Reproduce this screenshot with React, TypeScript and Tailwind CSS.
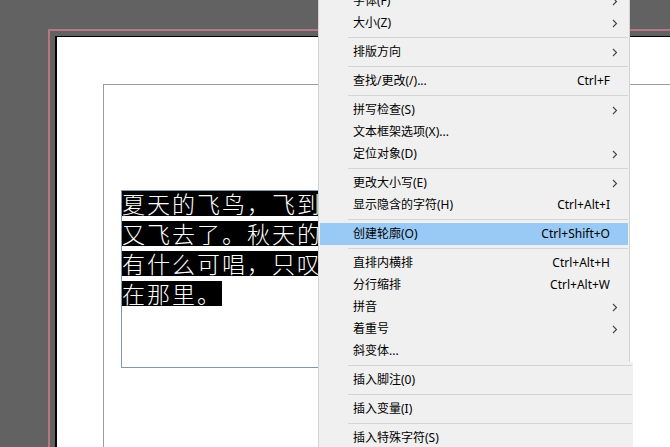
import React from "react";

type Item =
    | { kind: "sep" }
    | { kind: "item"; label: string; shortcut?: string; sub?: boolean; active?: boolean };

const upper: Item[] = [
    { kind: "item", label: "字体(F)", sub: true },
    { kind: "item", label: "大小(Z)", sub: true },
    { kind: "sep" },
    { kind: "item", label: "排版方向", sub: true },
    { kind: "sep" },
    { kind: "item", label: "查找/更改(/)...", shortcut: "Ctrl+F" },
    { kind: "sep" },
    { kind: "item", label: "拼写检查(S)", sub: true },
    { kind: "item", label: "文本框架选项(X)..." },
    { kind: "item", label: "定位对象(D)", sub: true },
    { kind: "sep" },
    { kind: "item", label: "更改大小写(E)", sub: true },
    { kind: "item", label: "显示隐含的字符(H)", shortcut: "Ctrl+Alt+I" },
    { kind: "sep" },
    { kind: "item", label: "创建轮廓(O)", shortcut: "Ctrl+Shift+O", active: true },
    { kind: "sep" },
    { kind: "item", label: "直排内横排", shortcut: "Ctrl+Alt+H" },
    { kind: "item", label: "分行缩排", shortcut: "Ctrl+Alt+W" },
    { kind: "item", label: "拼音", sub: true },
    { kind: "item", label: "着重号", sub: true },
    { kind: "item", label: "斜变体..." },
];

const lower: Item[] = [
    { kind: "sep" },
    { kind: "item", label: "插入脚注(0)" },
    { kind: "sep" },
    { kind: "item", label: "插入变量(I)" },
    { kind: "sep" },
    { kind: "item", label: "插入特殊字符(S)" },
];

const lines = ["夏天的飞鸟，飞到我的窗前唱歌，", "又飞去了。秋天的黄叶，它们没", "有什么可唱，只叹息一声，飞落", "在那里。"];

function Chevron() {
    return (
        <svg width="6" height="9" viewBox="0 0 6 9" className="block">
            <path d="M1 1 L4.5 4.5 L1 8" fill="none" stroke="#444" strokeWidth="1.1" />
        </svg>
    );
}

function MenuRows({ items }: { items: Item[] }) {
    return (
        <>
            {items.map((it, i) =>
                it.kind === "sep" ? (
                    <div key={i} className="h-[7px] flex items-center ml-[29px] mr-px">
                        <div className="h-px w-full bg-[#d5d5d5]" />
                    </div>
                ) : (
                    <div
                        key={i}
                        className={`h-[22px] mx-px pl-[33px] pr-[10px] flex items-center text-[12px] text-black ${it.active ? "bg-[#99c9f5]" : ""}`}
                    >
                        <span className="flex-1 whitespace-nowrap">{it.label}</span>
                        {it.shortcut && <span className="whitespace-nowrap">{it.shortcut}</span>}
                        <span className="w-[8px] flex justify-end">{it.sub && <Chevron />}</span>
                    </div>
                )
            )}
        </>
    );
}

export default function App() {
    return (
        <div className="w-[670px] h-[447px] bg-[#626262] relative overflow-hidden">
            {/* Canvas: bleed -> page -> margins -> text frame */}
            <div className="pt-[29px] pl-[48px]">
                <div className="border-l-2 border-t-2 border-[#b27883] pl-[5px] pt-[5px] h-[430px]">
                    <div className="border-l-2 border-t border-black bg-white pl-[46px] pt-[47px] h-full">
                        <div className="border-l border-t border-[#9c9c9c] pl-[17px] pt-[105px] h-full">
                            <div className="w-[320px] h-[178px] border border-[#8197ab]">
                                <div
                                    className="flex flex-col gap-[5px] font-light text-white"
                                    style={{ fontFamily: '"Noto Sans CJK SC Light", "Noto Sans CJK SC", "Noto Sans", sans-serif' }}
                                >
                                    {lines.map((l, i) => (
                                        <div key={i} className="w-fit bg-black h-[25px] leading-[25px] text-[23px] tracking-[2px] whitespace-nowrap">
                                            {l}
                                        </div>
                                    ))}
                                </div>
                            </div>
                        </div>
                    </div>
                </div>
            </div>

            {/* Context menu overlay */}
            <div
                className="absolute left-[318px] top-[-10px] z-10"
                style={{ fontFamily: '"Noto Sans", "Noto Sans CJK SC", sans-serif' }}
            >
                <div className="w-[312px] bg-[#f0f0f0] border-l border-r border-[#d2d2d2]">
                    <MenuRows items={upper} />
                </div>
                <div className="w-[315px] bg-[#f0f0f0] border-l border-[#d2d2d2]">
                    <MenuRows items={lower} />
                </div>
            </div>
        </div>
    );
}
